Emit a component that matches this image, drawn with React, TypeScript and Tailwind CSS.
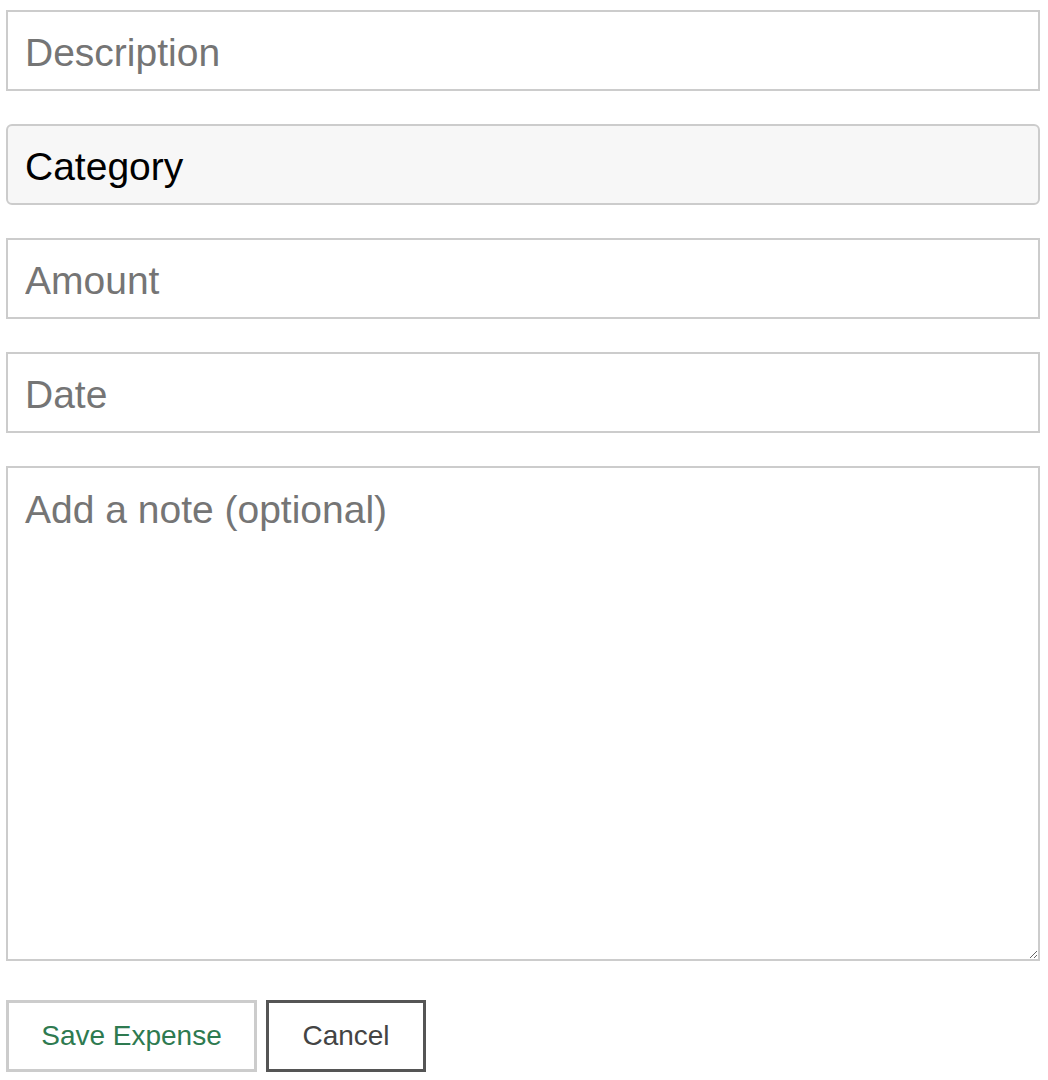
import * as React from "react";

const field =
  "block w-full h-[81px] border-2 border-[#cccccc] bg-white pl-[17px] pr-[15px] pt-[5px] text-[39px] text-black placeholder:text-[#757575] outline-none";

export default function App() {
  const [category, setCategory] = React.useState("");

  return (
    <div
      className="min-h-screen bg-white pl-[6px] pr-[8px] pt-[10px]"
      style={{ fontFamily: '"Liberation Sans", Arial, Helvetica, sans-serif' }}
    >
      <form className="flex flex-col gap-[33px]" onSubmit={(e) => e.preventDefault()}>
        <input type="text" placeholder="Description" className={field} />
        <select
          value={category}
          onChange={(e) => setCategory(e.target.value)}
          className="block w-full h-[81px] appearance-none rounded-[6px] border-2 border-[#cccccc] bg-[#f7f7f7] pl-[17px] pr-[15px] pt-[5px] text-[39px] text-black outline-none"
        >
          <option value="">Category</option>
          <option value="food">Food</option>
          <option value="travel">Travel</option>
          <option value="bills">Bills</option>
        </select>
        <input type="text" placeholder="Amount" className={field} />
        <input type="text" placeholder="Date" className={field} />
        <textarea
          placeholder="Add a note (optional)"
          className="block w-full h-[495px] border-2 border-[#cccccc] bg-white pl-[17px] pr-[15px] pt-[20px] pb-[16px] text-[39px] leading-[1.15] text-black placeholder:text-[#757575] outline-none"
        />
        <div className="mt-[6px] flex gap-[9px]">
          <button
            type="submit"
            className="h-[72px] w-[251px] border-[3px] border-[#cccccc] bg-white text-[28px] text-[#2e7a50]"
          >
            Save Expense
          </button>
          <button
            type="button"
            className="h-[72px] w-[160px] border-[3px] border-[#555555] bg-white text-[28px] text-[#444444]"
          >
            Cancel
          </button>
        </div>
      </form>
    </div>
  );
}
